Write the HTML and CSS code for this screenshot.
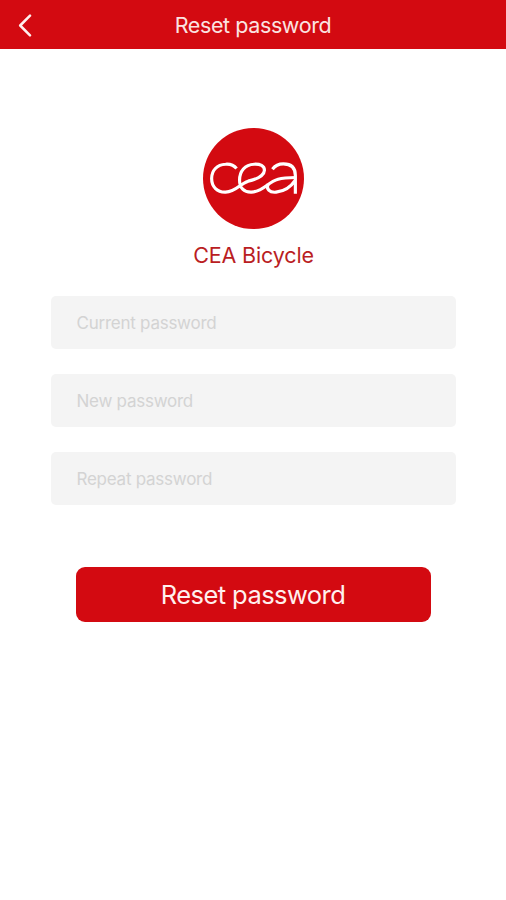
FILE: index.html
```html
<!DOCTYPE html>
<html lang="en">
<head>
<meta charset="utf-8">
<title>Reset password</title>
<link rel="stylesheet" href="styles.css">
</head>
<body>
<header class="topbar">
  <button class="back" type="button" aria-label="Back">
    <svg width="14" height="24" viewBox="0 0 14 24"><path d="M12 2.7 2.2 12.5l9.8 9.8"/></svg>
  </button>
  <h1 class="title">Reset password</h1>
</header>
<main class="content">
  <svg class="logo" viewBox="24 24 304 304" role="img" aria-label="CEA">
    <circle cx="176" cy="176" r="152"/>
    <path d="M125 146C117 136 105 132 92 133C66 134 50 152 50 176C50 201 67 218 92 217C124 216 134 192 160 184C182 179 208 171 209 151C209 138 196 132 178 133C150 134 134 154 134 181C134 204 147 218 170 217C206 215 218 187 250 178C267 173 286 173 303 173"/>
    <path d="M233 148C241 137 252 132 266 132C290 132 302 144 302 167V222M220 193C213 207 224 219 244 217C269 215 290 199 302 181"/>
  </svg>
  <p class="brand">CEA Bicycle</p>
  <form class="form">
    <input class="field" type="password" placeholder="Current password">
    <input class="field" type="password" placeholder="New password">
    <input class="field" type="password" placeholder="Repeat password">
    <button class="submit" type="button">Reset password</button>
  </form>
</main>
</body>
</html>
```
FILE: styles.css
```css
* { box-sizing: border-box; }
body { margin: 0; background: #fff; font-family: Inter, "Liberation Sans", sans-serif; }
.topbar {
  height: 49px;
  display: grid;
  grid-template-columns: 50px 1fr 50px;
  align-items: center;
  background: #d30a11;
  color: #fbe3e1;
}
.back { display: flex; justify-content: center; padding: 0; border: 0; background: none; }
.back path { fill: none; stroke: #fff0ee; stroke-width: 2.5; stroke-linecap: round; stroke-linejoin: round; }
.title { margin: 0; text-align: center; font-size: 21.5px; font-weight: 400; line-height: 28px; letter-spacing: -0.4px; }
.content { display: flex; flex-direction: column; align-items: center; padding-top: 79px; }
.logo { width: 101px; height: 101px; margin-left: 1px; }
.logo circle { fill: #d30a11; }
.logo path { fill: none; stroke: #fff; stroke-width: 9.5; stroke-linejoin: round; }
.brand { margin: 12px 0 0 1px; font-size: 21.5px; line-height: 28px; letter-spacing: -0.15px; color: #ba1d23; }
.form { width: 405px; margin-top: 27px; display: flex; flex-direction: column; gap: 25px; }
.field {
  height: 53px;
  padding: 0 26px;
  border: 0;
  border-radius: 5px;
  background: #f4f4f4;
  font: 17px Inter, "Liberation Sans", sans-serif;
  letter-spacing: -0.25px;
}
.field::placeholder { color: #d3d3d3; opacity: 1; }
.submit {
  width: 355px;
  height: 55px;
  margin: 37px auto 0;
  padding: 0;
  border: 0;
  border-radius: 9px;
  background: #d30a11;
  color: #fff0ee;
  font: 25.5px Inter, "Liberation Sans", sans-serif;
  letter-spacing: -0.55px;
}
```
